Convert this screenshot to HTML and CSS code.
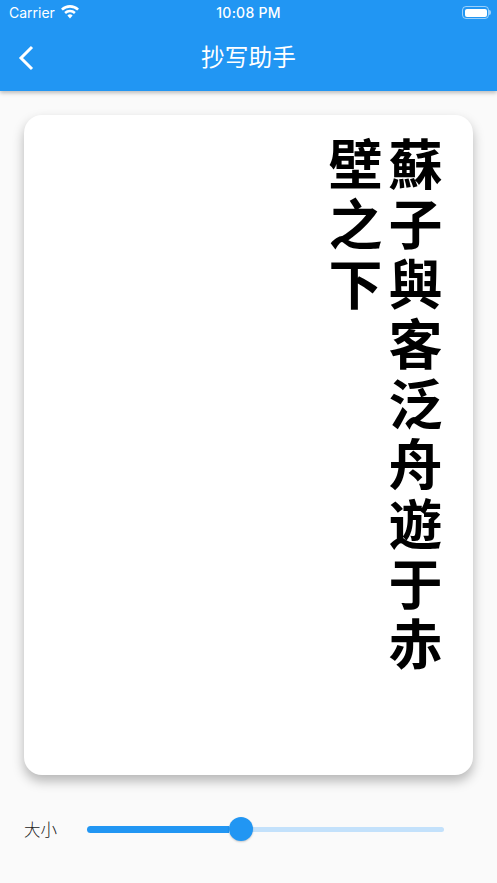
FILE: index.html
```html
<!DOCTYPE html>
<html lang="zh">
<head>
<meta charset="utf-8">
<title>抄写助手</title>
<link rel="stylesheet" href="styles.css">
</head>
<body>
<div class="screen">
  <header class="appbar">
    <div class="status">
      <div class="status-left">
        <span>Carrier</span>
        <svg class="wifi" viewBox="0 0 20 15" width="18" height="14">
          <path d="M10 14.6 7.1 11.4a4.2 4.2 0 0 1 5.800 0Z" fill="#fff"/>
          <path d="M5.500 9.700 3.600 7.600a9.300 9.300 0 0 1 12.800 0l-1.900 2.100a6.500 6.500 0 0 0-9 0Z" fill="#fff"/>
          <path d="M2 5.900 0 3.800a14.400 14.400 0 0 1 20 0l-2 2.100a11.600 11.600 0 0 0-16 0Z" fill="#fff"/>
        </svg>
      </div>
      <span class="time">10:08 PM</span>
      <div class="battery"><span class="battery-fill"></span><span class="battery-cap"></span></div>
    </div>
    <div class="toolbar">
      <svg class="back" viewBox="0 0 16 26" width="16" height="26">
        <path d="M14 2 3 13l11 11" fill="none" stroke="#fff" stroke-width="3"/>
      </svg>
      <h1 class="title">抄写助手</h1>
    </div>
  </header>
  <main class="body">
    <section class="card">
      <p class="poem">蘇子與客泛舟遊于赤壁之下</p>
    </section>
    <div class="control">
      <span class="label">大小</span>
      <div class="slider">
        <div class="track-on"></div>
        <div class="thumb"></div>
        <div class="track-off"></div>
      </div>
    </div>
  </main>
</div>
</body>
</html>
```
FILE: styles.css
```css
* { box-sizing: border-box; }
html, body { margin: 0; padding: 0; }
body {
  width: 497px;
  height: 883px;
  overflow: hidden;
  background: #fafafa;
  font-family: "Noto Sans CJK SC", "Noto Sans", sans-serif;
}
.screen { height: 883px; display: flex; flex-direction: column; }
.appbar {
  height: 91px;
  flex: none;
  background: #2196f3;
  color: #fff;
  box-shadow: 0 2px 4px rgba(0,0,0,.25);
  position: relative;
  z-index: 1;
}
.status {
  height: 25px;
  padding: 0 8px 0 9px;
  display: grid;
  grid-template-columns: 1fr auto 1fr;
  align-items: center;
  font-family: Inter, "Liberation Sans", sans-serif;
  font-size: 14px;
  color: #fff;
}
.status-left { display: flex; align-items: center; gap: 6px; }
.wifi { margin-top: -2px; }
.time { font-weight: 500; letter-spacing: .25px; margin-left: -1px; }
.battery {
  justify-self: end;
  width: 27px;
  height: 13px;
  border: 1px solid rgba(255,255,255,.55);
  border-radius: 4px;
  padding: 1.500px;
  display: flex;
  position: relative;
}
.battery-fill { flex: 1; background: #fff; border-radius: 2px; }
.battery-cap {
  position: absolute;
  right: -3px;
  top: 3px;
  width: 2px;
  height: 5px;
  background: rgba(255,255,255,.55);
  border-radius: 0 2px 2px 0;
}
.toolbar {
  height: 66px;
  padding-bottom: 4px;
  display: flex;
  align-items: center;
  justify-content: center;
  position: relative;
}
.back { position: absolute; left: 18px; top: 20px; }
.title {
  margin: 0;
  font-size: 23.700px;
  font-weight: 400;
  line-height: 32px;
}
.body { flex: 1; display: flex; flex-direction: column; padding: 24px 24px 0; }
.card {
  height: 660px;
  background: #fff;
  border-radius: 18px;
  box-shadow: 0 6px 12px rgba(0,0,0,.28);
  padding: 22px 0 0 0;
  display: flex;
  justify-content: flex-end;
}
.poem {
  margin: 0 28px 0 0;
  height: 550px;
  writing-mode: vertical-rl;
  font-family: "Noto Sans CJK TC", "Noto Sans CJK SC", sans-serif;
  font-size: 54px;
  font-weight: 700;
  line-height: 60px;
  letter-spacing: 6px;
  color: #000;
}
.control {
  display: flex;
  align-items: center;
  margin-top: 41px;
  height: 26px;
}
.label { width: 63px; font-size: 16.500px; font-weight: 300; color: #222; line-height: 26px; }
.slider { width: 357px; display: flex; align-items: center; }
.track-on { width: 142px; height: 7px; background: #2196f3; border-radius: 4px 0 0 4px; }
.thumb {
  width: 24px;
  height: 24px;
  flex: none;
  border-radius: 50%;
  background: #2196f3;
  box-shadow: 0 1px 2px rgba(0,0,0,.2);
  margin-right: -1px;
  position: relative;
}
.track-off { flex: 1; height: 5px; background: #c3e1fb; border-radius: 0 3px 3px 0; }
```
